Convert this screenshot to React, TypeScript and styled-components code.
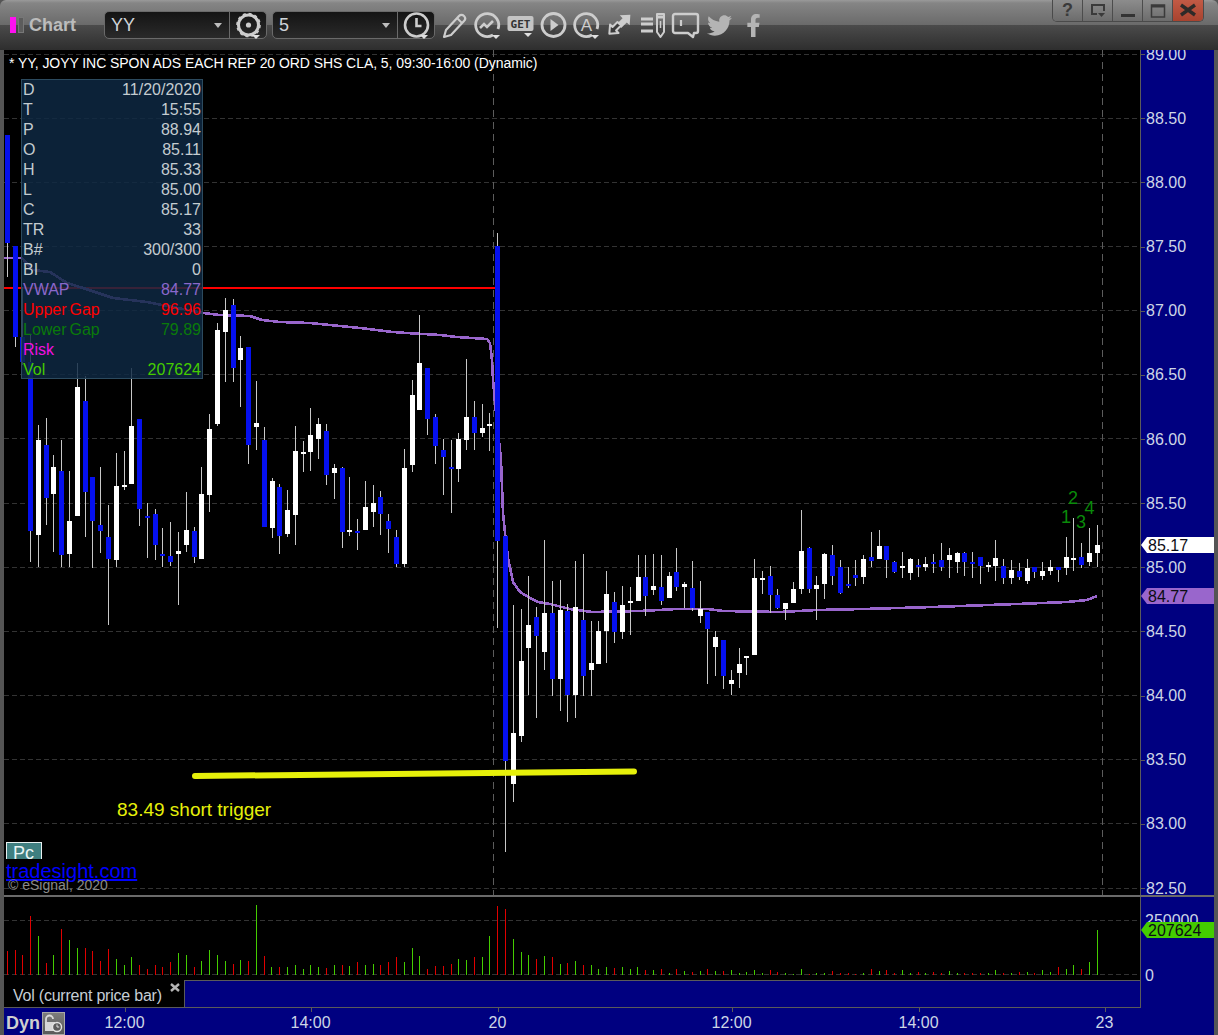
import React from "react";
import styled, { createGlobalStyle } from "styled-components";
import { FaTwitter, FaFacebookF } from "react-icons/fa";

const Global = createGlobalStyle`
  html, body { margin: 0; padding: 0; background: #555; }
  body { font-family: "Liberation Sans", Arial, sans-serif; }
`;

const AXIS_BLUE = "#000080";
const AXIS_TEXT = "#cdd6e6";
const LINE = "#5a5a5a";

const Page = styled.div`
  width: 1218px;
  height: 1035px;
  display: flex;
  flex-direction: column;
  overflow: hidden;
  background: #555;
  position: relative;
`;

/* ---------- toolbar ---------- */
const Toolbar = styled.header`
  height: 50px;
  flex: none;
  display: flex;
  align-items: center;
  padding-left: 10px;
  border-radius: 6px 6px 0 0;
  background: linear-gradient(
    #9a9a9a 0,
    #858585 3px,
    #6a6a6a 25px,
    #4b4b4b 25px,
    #3e3e3e 36px,
    #2e2e2e 50px
  );
`;
const TitleBlock = styled.div`
  width: 94px;
  flex: none;
  display: flex;
  align-items: center;
  gap: 2px;
`;
const Mark = styled.span<{ $on?: boolean }>`
  width: 6px;
  height: 16px;
  background: ${(p) => (p.$on ? "#ff10f0" : "#5c5c5c")};
  border: ${(p) => (p.$on ? "0" : "1px solid #777")};
  box-sizing: border-box;
`;
const TitleText = styled.span`
  margin-left: 3px;
  font-size: 18px;
  font-weight: 700;
  color: #bcbcbc;
`;
const Combo = styled.div`
  width: 163px;
  height: 28px;
  flex: none;
  margin-right: 5px;
  display: flex;
  box-sizing: border-box;
  border: 1px solid #6a6a6a;
  border-radius: 5px;
  background: linear-gradient(#141414, #2a2a2a);
`;
const ComboField = styled.div`
  flex: 1;
  display: flex;
  align-items: center;
  justify-content: space-between;
  padding: 0 7px 0 6px;
  font-size: 18px;
  color: #cfd4d8;
  border-right: 1px solid #6a6a6a;
`;
const Caret = styled.span`
  width: 0;
  height: 0;
  border-left: 4.5px solid transparent;
  border-right: 4.5px solid transparent;
  border-top: 5px solid #bdbdbd;
`;
const ComboButton = styled.div`
  width: 36px;
  flex: none;
  display: flex;
  align-items: center;
  justify-content: center;
`;
const IconRow = styled.div`
  display: flex;
  margin-left: -2.5px;
`;
const IconCell = styled.div<{ $wide?: boolean }>`
  width: ${(p) => (p.$wide ? 34 : 33)}px;
  height: 30px;
  flex: none;
  display: flex;
  align-items: center;
  justify-content: center;
  color: #b4b4b4;
`;
const WindowButtons = styled.div`
  margin-left: auto;
  margin-right: 14px;
  align-self: flex-start;
  display: flex;
  height: 21px;
  border: 1px solid #4a4a4a;
  border-top: 0;
  border-radius: 0 0 5px 5px;
  overflow: hidden;
`;
const WinButton = styled.div<{ $close?: boolean }>`
  width: 30px;
  box-sizing: border-box;
  display: flex;
  align-items: center;
  justify-content: center;
  border-right: 1px solid #4c4c4c;
  background: ${(p) =>
    p.$close
      ? "linear-gradient(#c25a45, #a8432f)"
      : "linear-gradient(#8c8c8c, #6c6c6c)"};
  font-size: 18px;
  font-weight: 700;
  color: #3a3a3a;
  &:last-child {
    border-right: 0;
  }
`;

/* ---------- price panel ---------- */
const Body = styled.main`
  flex: 1;
  display: flex;
  flex-direction: column;
  margin: 0 4px 4px;
  min-height: 0;
`;
const PriceRow = styled.section`
  height: 845px;
  flex: none;
  display: flex;
`;
const Plot = styled.div`
  width: 1136px;
  flex: none;
  position: relative;
  background: #000;
  overflow: hidden;
`;
const ChartSvg = styled.svg`
  display: block;
`;
const Headline = styled.div`
  position: absolute;
  left: 5px;
  top: 5px;
  font-size: 14px;
  line-height: 16px;
  letter-spacing: -0.06px;
  color: #fff;
  white-space: nowrap;
`;
const InfoPanel = styled.div`
  position: absolute;
  left: 17px;
  top: 29px;
  width: 182px;
  box-sizing: border-box;
  padding-top: 1px;
  height: 300px;
  box-shadow: inset 0 0 0 1px #2c4a5e;
  background: rgba(15, 41, 67, 0.83);
`;
const InfoRow = styled.div<{ $color?: string }>`
  height: 20px;
  padding: 0 2px;
  display: flex;
  justify-content: space-between;
  font-size: 16px;
  line-height: 20px;
  word-spacing: -1.5px;
  color: ${(p) => p.$color || "#c4ccd0"};
`;
const Trigger = styled.div`
  position: absolute;
  left: 113px;
  top: 749px;
  font-size: 19px;
  line-height: 22px;
  color: #e6f00a;
`;
const PcBadge = styled.div`
  position: absolute;
  left: 2px;
  top: 792px;
  width: 36px;
  height: 17px;
  box-sizing: border-box;
  border: 1px solid #e8f0f0;
  border-bottom: 0;
  background: #3f7f80;
  color: #e8f4f4;
  font-size: 18px;
  line-height: 21px;
  padding-left: 6px;
  overflow: hidden;
`;
const SiteLink = styled.div`
  position: absolute;
  left: 2px;
  top: 810px;
  font-size: 20px;
  line-height: 22px;
  color: #0000ff;
  text-decoration: underline;
`;
const Copyright = styled.div`
  position: absolute;
  left: 4px;
  top: 827px;
  font-size: 14px;
  line-height: 16px;
  color: #8a8a8a;
`;

const PriceAxis = styled.div`
  flex: 1;
  box-sizing: border-box;
  border-left: 1px solid ${LINE};
  background: ${AXIS_BLUE};
  position: relative;
  overflow: hidden;
`;
const PriceScale = styled.div`
  margin-top: -27.4px;
  display: flex;
  flex-direction: column;
`;
const PriceLabel = styled.div`
  height: 64.154px;
  flex: none;
  display: flex;
  align-items: center;
  gap: 1px;
  font-size: 16px;
  color: ${AXIS_TEXT};
  &::before {
    content: "";
    width: 4px;
    height: 1px;
    background: ${LINE};
  }
`;
const Tag = styled.div<{ $top: number; $bg: string }>`
  position: absolute;
  left: 0;
  right: 0;
  top: ${(p) => p.$top}px;
  height: 16px;
  padding-left: 7px;
  background: ${(p) => p.$bg};
  color: #0c0c14;
  font-size: 16px;
  line-height: 17px;
  clip-path: polygon(0 50%, 6px 0, 100% 0, 100% 100%, 6px 100%);
`;

const Separator = styled.div`
  height: 2px;
  flex: none;
  background: #6a6a6a;
`;

/* ---------- volume panel ---------- */
const LowerRow = styled.section`
  height: 111px;
  flex: none;
  display: flex;
`;
const LowerLeft = styled.div`
  width: 1136px;
  flex: none;
  display: flex;
  flex-direction: column;
`;
const VolumePlot = styled.div`
  height: 83px;
  flex: none;
  background: #000;
`;
const LegendRow = styled.div`
  height: 28px;
  flex: none;
  display: flex;
  box-sizing: border-box;
  border-bottom: 1px solid ${LINE};
`;
const LegendLabel = styled.div`
  width: 180px;
  flex: none;
  position: relative;
  background: #000;
  padding-left: 9px;
  box-sizing: border-box;
  font-size: 16px;
  line-height: 31px;
  letter-spacing: -0.22px;
  color: #c6ced6;
`;
const CloseGlyph = styled.svg`
  position: absolute;
  right: 4px;
  top: 3px;
`;
const LegendFill = styled.div`
  flex: 1;
  background: ${AXIS_BLUE};
  border-top: 1px solid ${LINE};
  border-left: 1px solid ${LINE};
`;
const VolumeAxis = styled.div`
  flex: 1;
  box-sizing: border-box;
  border-left: 1px solid ${LINE};
  background: ${AXIS_BLUE};
  position: relative;
  overflow: hidden;
  font-size: 16px;
  color: ${AXIS_TEXT};
  padding-left: 4px;
`;
const VolumeTick = styled.div<{ $mt: number }>`
  height: 18px;
  line-height: 18px;
  margin-top: ${(p) => p.$mt}px;
`;

/* ---------- time row ---------- */
const TimeRow = styled.footer`
  flex: 1;
  display: flex;
  background: ${AXIS_BLUE};
`;
const DynCell = styled.div`
  width: 61px;
  flex: none;
  display: flex;
  align-items: center;
  padding-left: 2px;
  box-sizing: border-box;
  font-size: 18px;
  font-weight: 700;
  color: #cfcfcf;
  gap: 2px;
`;
const LockButton = styled.div`
  width: 23px;
  height: 23px;
  flex: none;
  box-sizing: border-box;
  border: 1px solid #a8a8a8;
  background: linear-gradient(#7c7c7c, #5a5a5a);
  display: flex;
  align-items: center;
  justify-content: center;
`;
const TimeTick = styled.div<{ $gap: number }>`
  width: 0;
  flex: none;
  margin-left: ${(p) => p.$gap}px;
  display: flex;
  justify-content: center;
  position: relative;
  font-size: 16px;
  line-height: 30px;
  color: ${AXIS_TEXT};
  white-space: nowrap;
  &::before {
    content: "";
    position: absolute;
    left: 0;
    top: 0;
    width: 1px;
    height: 4px;
    background: ${LINE};
  }
`;

/* ---------- data (page pixel coordinates) ---------- */
// x, wickTop, wickBottom, bodyTop, bodyBottom, white?
const candles: number[][] = [
  [7,135,277,135,243,0],[15,246,347,246,337,0],[22,287,365,337,362,0],[30,335,562,362,531,0],
  [38,425,567,440,535,1],[46,418,525,445,498,0],[53,455,552,467,494,1],[61,440,567,471,555,0],
  [69,471,567,521,554,1],[77,363,516,387,516,1],[85,376,537,401,492,0],[92,477,568,477,521,0],
  [100,467,553,525,531,0],[108,505,625,537,559,0],[116,453,567,486,560,1],[124,451,490,485,487,1],
  [131,368,484,426,484,1],[139,419,526,419,509,0],[147,503,558,516,518,0],[155,509,560,514,545,0],
  [162,528,567,554,556,0],[170,522,566,556,562,0],[178,532,605,551,554,1],[186,492,552,530,545,1],
  [194,527,563,531,557,0],[201,467,559,494,559,1],[209,414,512,429,495,1],[217,323,426,330,424,1],
  [225,298,382,310,332,1],[233,299,382,305,368,0],[240,336,407,348,360,1],[248,347,464,347,445,0],
  [256,381,450,423,427,1],[264,427,527,440,527,0],[272,478,538,481,528,1],[279,484,554,487,536,0],
  [287,490,537,510,534,1],[295,426,545,451,515,1],[303,441,472,452,454,1],[310,408,471,435,452,1],
  [318,418,459,424,439,1],[326,424,485,431,475,0],[334,464,499,468,473,1],[342,467,548,468,532,0],
  [349,477,536,530,532,1],[357,519,550,531,533,0],[365,481,530,507,530,1],[373,485,527,503,512,1],
  [380,491,535,497,514,0],[388,514,553,521,529,0],[396,530,567,537,564,0],[404,449,567,468,564,1],
  [412,380,472,395,465,1],[419,315,410,363,410,1],[427,368,435,368,419,0],[435,414,464,417,446,0],
  [443,439,495,450,457,0],[451,440,513,467,469,0],[458,433,482,439,469,1],[466,359,450,417,440,1],
  [474,401,450,417,433,0],[482,404,437,428,433,1],[489,413,451,424,426,1],[497,233,628,246,541,0],
  [505,536,852,536,761,0],[513,605,802,733,784,1],[521,609,742,661,736,1],[528,576,695,625,648,1],
  [536,607,718,617,636,0],[544,540,670,613,652,1],[552,581,696,613,679,0],[560,580,711,610,679,1],
  [567,604,722,611,695,0],[575,561,718,607,695,1],[583,554,696,620,676,0],[591,621,696,663,670,1],
  [598,621,664,631,664,1],[606,571,663,594,631,1],[614,592,643,602,632,0],[622,586,639,605,632,1],
  [630,587,635,601,603,1],[638,555,601,577,601,1],[645,555,616,577,596,0],[653,554,595,586,590,1],
  [661,555,605,587,601,0],[669,572,598,576,598,1],[676,548,591,572,587,0],[684,582,608,584,587,1],
  [692,561,611,588,608,0],[700,581,623,609,616,1],[707,612,684,612,629,0],[715,631,676,637,647,1],
  [723,640,689,640,676,0],[731,670,695,680,684,1],[739,648,688,664,673,1],[746,656,675,656,658,1],
  [754,559,655,578,655,1],[762,571,594,578,580,1],[770,566,613,576,595,0],[777,589,609,595,608,0],
  [785,603,620,603,609,1],[793,582,603,589,603,1],[801,510,594,551,589,1],[809,547,593,548,589,0],
  [816,576,620,585,589,1],[824,553,599,554,584,1],[832,545,585,555,576,0],[840,560,594,567,593,0],
  [848,567,588,584,586,0],[855,560,586,575,578,0],[863,555,584,559,577,1],[871,532,567,557,561,0],
  [879,530,559,546,559,1],[886,546,578,546,560,0],[894,561,573,562,572,0],[902,552,578,566,568,1],
  [910,558,580,559,573,1],[918,559,577,565,567,0],[925,557,571,564,567,1],[933,554,573,562,564,0],
  [941,543,571,560,567,0],[949,548,578,555,560,1],[957,552,573,553,562,1],[964,552,576,553,562,0],
  [972,552,578,562,564,0],[980,557,584,557,566,0],[988,562,572,565,567,1],[995,540,581,558,566,1],
  [1003,559,584,566,578,0],[1011,560,584,570,578,1],[1019,563,580,571,577,0],[1027,559,584,568,581,1],
  [1034,567,578,567,572,0],[1042,562,580,571,576,1],[1050,560,575,567,571,1],[1058,567,582,567,570,0],
  [1066,537,575,557,568,1],[1073,518,571,558,560,1],[1081,543,568,557,565,0],[1089,528,566,553,562,1],
  [1097,525,567,545,553,1],
];

// x, top, green?
const volumes: number[][] = [
  [7,951,0],[15,950,0],[22,955,0],[30,916,0],[38,936,1],[46,963,0],[53,955,1],[61,929,0],[69,940,1],[77,948,1],
  [85,948,0],[92,951,0],[100,961,0],[108,949,0],[116,959,1],[124,965,1],[131,957,1],[139,965,0],[147,969,0],[155,965,0],
  [162,967,0],[170,962,0],[178,953,1],[186,955,1],[194,967,0],[201,961,1],[209,950,1],[217,955,1],[225,961,1],[233,964,0],
  [240,960,1],[248,961,0],[256,905,1],[264,956,0],[271,967,1],[279,967,0],[287,967,1],[295,965,1],[303,969,1],[310,965,1],
  [318,967,1],[326,968,0],[334,965,1],[342,965,0],[349,966,1],[357,962,0],[365,965,1],[373,964,1],[380,965,0],[388,962,0],
  [396,957,0],[404,962,1],[412,948,1],[419,956,1],[427,969,0],[435,966,0],[443,966,0],[451,964,0],[458,959,1],[466,960,1],
  [474,957,0],[482,957,1],[489,936,1],[497,906,0],[505,909,0],[513,939,1],[521,952,1],[528,955,1],[536,959,0],[544,956,1],
  [552,957,0],[560,964,1],[567,963,0],[575,961,1],[583,965,0],[591,965,1],[598,969,1],[606,967,1],[614,968,0],[622,967,1],
  [630,969,1],[637,967,1],[645,970,0],[653,970,1],[661,969,0],[669,973,1],[676,969,0],[684,971,1],[692,972,0],[700,971,1],
  [707,969,0],[715,971,1],[723,971,0],[731,970,1],[739,973,1],[746,972,1],[754,970,1],[762,973,1],[770,970,0],[777,972,0],
  [785,973,1],[793,974,1],[801,969,1],[809,974,0],[816,973,1],[824,973,1],[832,971,0],[840,973,0],[848,973,0],[855,974,0],
  [863,973,1],[871,969,0],[879,971,1],[886,970,0],[894,973,0],[902,970,1],[910,973,1],[918,972,0],[925,973,1],[933,972,0],
  [941,973,0],[949,971,1],[957,973,1],[964,973,0],[972,973,0],[980,973,0],[988,973,1],[995,970,1],[1003,973,0],[1011,973,1],
  [1019,972,0],[1027,972,1],[1034,973,0],[1042,970,1],[1050,972,1],[1058,967,0],[1066,969,1],[1073,965,1],[1081,969,0],[1089,962,1],
  [1097,930,1],
];

const vwap =
  "4,258 22,258 33,270 50,272 67,283 83,288 113,298 147,302 203,313 220,315 250,316 262,320 280,322 310,323 340,326 360,328 393,332 407,333 440,335 457,337 487,339 490,343 492,360 493,380 495,403 501,460 502,487 503,513 505,533 508,558 513,582 520,592 530,598 538,602 550,604 570,609 592,612 640,611 677,609 707,609 723,611 780,612 817,610 863,609 933,607 1017,604 1067,602 1087,600 1097,596";

const prices = ["89.00","88.50","88.00","87.50","87.00","86.50","86.00","85.50","85.00","84.50","84.00","83.50","83.00","82.50"];
const gridY = prices.map((_, i) => Math.round(53.5 + i * 64.154) + 0.5);

const info: { k: string; v?: string; c?: string }[] = [
  { k: "D", v: "11/20/2020" },
  { k: "T", v: "15:55" },
  { k: "P", v: "88.94" },
  { k: "O", v: "85.11" },
  { k: "H", v: "85.33" },
  { k: "L", v: "85.00" },
  { k: "C", v: "85.17" },
  { k: "TR", v: "33" },
  { k: "B#", v: "300/300" },
  { k: "BI", v: "0" },
  { k: "VWAP", v: "84.77", c: "#8a68cc" },
  { k: "Upper Gap", v: "96.96", c: "#ff0000" },
  { k: "Lower Gap", v: "79.89", c: "#0a7a0a" },
  { k: "Risk", c: "#f010e0" },
  { k: "Vol", v: "207624", c: "#44cc00" },
];

const times: [string, number][] = [
  ["12:00", 59.5],
  ["14:00", 186],
  ["20", 187],
  ["12:00", 234],
  ["14:00", 187],
  ["23", 186],
];

/* ---------- icons ---------- */
const IC = "#cdcdcd";
const Drop = ({ x, y }: { x: number; y: number }) => (
  <path d={`M${x - 4} ${y}h8l-4 4z`} fill="#e0e0e0" />
);
const Svg: React.FC<{ children: React.ReactNode }> = ({ children }) => (
  <svg width="33" height="30" viewBox="0 0 33 30" fill="none">
    {children}
  </svg>
);
const GearIcon = () => (
  <Svg>
    <circle cx="16.5" cy="15" r="10" stroke={IC} strokeWidth="3" />
    <circle cx="16.5" cy="15" r="11.5" stroke={IC} strokeWidth="1.6" strokeDasharray="3 3" />
    <circle cx="16.5" cy="15" r="2.6" fill={IC} />
    <Drop x={24} y={25} />
  </Svg>
);
const ClockIcon = () => (
  <Svg>
    <circle cx="16.5" cy="15" r="11.5" stroke={IC} strokeWidth="2.6" />
    <path d="M16.5 8v8h5" stroke={IC} strokeWidth="2.6" />
    <Drop x={24} y={25} />
  </Svg>
);
const PencilIcon = () => (
  <Svg>
    <path
      d="M6 27l2-7L21 6c1.500-1.500 3.500-1.500 5 0s1.500 3.500 0 5L13 25z"
      stroke={IC}
      strokeWidth="2.200"
      strokeLinejoin="round"
    />
    <path d="M19 8l5 5" stroke={IC} strokeWidth="1.800" />
  </Svg>
);
const ChartIcon = () => (
  <Svg>
    <path d="M22 25a11.500 11.500 0 1 1 5-6" stroke={IC} strokeWidth="2.800" />
    <path d="M9 18l4-4 3 3 6-6" stroke={IC} strokeWidth="2.600" />
    <Drop x={25} y={25} />
  </Svg>
);
const GetIcon = () => (
  <Svg>
    <rect x="3.500" y="6" width="26" height="15" rx="2" fill="#c4c4c4" />
    <text x="16.500" y="18" textAnchor="middle" fontFamily="'DejaVu Sans Mono', monospace" fontSize="11" fontWeight="700" fill="#333">
      GET
    </text>
    <Drop x={24} y={23} />
  </Svg>
);
const PlayIcon = () => (
  <Svg>
    <circle cx="16.500" cy="15" r="11.500" stroke={IC} strokeWidth="2.800" />
    <path d="M13.500 9l8 6-8 6z" fill={IC} />
  </Svg>
);
const AutoIcon = () => (
  <Svg>
    <path d="M22 25a11.500 11.500 0 1 1 5-6" stroke={IC} strokeWidth="2.800" />
    <text x="16.500" y="21" textAnchor="middle" fontFamily="'Liberation Sans', sans-serif" fontSize="17" fill={IC}>
      A
    </text>
    <Drop x={25} y={25} />
  </Svg>
);
const SwapIcon = () => (
  <Svg>
    <g transform="translate(21 11) rotate(45)">
      <path d="M0-9L7-1H3V7H-3V-1H-7z" fill={IC} />
    </g>
    <g transform="translate(12 18) rotate(225)">
      <path d="M0-8L6-1H2.500V6H-2.500V-1H-6z" fill="#3a3a3a" stroke={IC} strokeWidth="2" strokeLinejoin="round" />
    </g>
  </Svg>
);
const ListIcon = () => (
  <Svg>
    <path d="M5 9h12M5 14h12M5 21h12" stroke={IC} strokeWidth="2.800" />
    <path d="M21 4h7v18l-3.500 5-3.500-5z" stroke={IC} strokeWidth="2" strokeLinejoin="round" />
    <path d="M21 7h7" stroke={IC} strokeWidth="3" />
    <path d="M24.500 11v7" stroke={IC} strokeWidth="1.500" />
  </Svg>
);
const SpeechIcon = () => (
  <Svg>
    <path
      d="M6 4h21a2 2 0 0 1 2 2v15a2 2 0 0 1-2 2h-2l-1 4-5-4H6a2 2 0 0 1-2-2V6a2 2 0 0 1 2-2z"
      stroke={IC}
      strokeWidth="2.400"
      strokeLinejoin="round"
    />
    <path d="M12 10v6" stroke={IC} strokeWidth="2.200" />
  </Svg>
);
const LockClock = () => (
  <svg width="21" height="21" viewBox="0 0 21 21" fill="none">
    <path d="M3 9V6a3.500 3.500 0 0 1 7 0" stroke="#d8d8d8" strokeWidth="1.800" />
    <rect x="2" y="9" width="10" height="9" fill="#d8d8d8" />
    <circle cx="14" cy="14" r="4.500" fill="#5c5c5c" stroke="#e4e4e4" strokeWidth="1.400" />
    <path d="M14 11.500V14h2.200" stroke="#e4e4e4" />
  </svg>
);

export default function App() {
  return (
    <>
      <Global />
      <Page>
        <Toolbar>
          <TitleBlock>
            <Mark $on />
            <Mark />
            <TitleText>Chart</TitleText>
          </TitleBlock>
          <Combo>
            <ComboField>
              YY
              <Caret />
            </ComboField>
            <ComboButton>
              <GearIcon />
            </ComboButton>
          </Combo>
          <Combo>
            <ComboField>
              5
              <Caret />
            </ComboField>
            <ComboButton>
              <ClockIcon />
            </ComboButton>
          </Combo>
          <IconRow>
            <IconCell><PencilIcon /></IconCell>
            <IconCell><ChartIcon /></IconCell>
            <IconCell><GetIcon /></IconCell>
            <IconCell><PlayIcon /></IconCell>
            <IconCell><AutoIcon /></IconCell>
            <IconCell><SwapIcon /></IconCell>
            <IconCell><ListIcon /></IconCell>
            <IconCell $wide><SpeechIcon /></IconCell>
            <IconCell $wide><FaTwitter size={25} /></IconCell>
            <IconCell $wide><FaFacebookF size={23} /></IconCell>
          </IconRow>
          <WindowButtons>
            <WinButton>?</WinButton>
            <WinButton>
              <svg width="18" height="17" viewBox="0 0 18 17" fill="none">
                <path d="M8 12H3V3h12v6" stroke="#3a3a3a" strokeWidth="2" />
                <path d="M9 11h7l-3.500 4z" fill="#3a3a3a" />
              </svg>
            </WinButton>
            <WinButton>
              <svg width="18" height="17" viewBox="0 0 18 17">
                <rect x="2" y="12" width="14" height="3" fill="#333" />
              </svg>
            </WinButton>
            <WinButton>
              <svg width="18" height="17" viewBox="0 0 18 17" fill="none">
                <rect x="2.500" y="3" width="13" height="12" stroke="#3a3a3a" strokeWidth="1.500" />
                <rect x="2" y="3" width="14" height="2.500" fill="#3a3a3a" />
              </svg>
            </WinButton>
            <WinButton $close>
              <svg width="20" height="17" viewBox="0 0 20 17" fill="none">
                <path d="M3 3l14 10M17 3L3 13" stroke="#2e2a28" strokeWidth="3.400" />
              </svg>
            </WinButton>
          </WindowButtons>
        </Toolbar>

        <Body>
          <PriceRow>
            <Plot>
              <ChartSvg width="1136" height="845" viewBox="4 50 1136 845">
                <g stroke="#333333" strokeDasharray="5 3" shapeRendering="crispEdges">
                  {gridY.map((y) => (
                    <line key={y} x1="4" x2="1140" y1={y} y2={y} />
                  ))}
                </g>
                <g stroke="#5c5c5c" strokeDasharray="7 5" shapeRendering="crispEdges">
                  <line x1="493.500" x2="493.500" y1="50" y2="895" />
                  <line x1="1102.500" x2="1102.500" y1="50" y2="895" />
                </g>
                <rect x="4" y="287" width="491" height="2" fill="#ff0000" />
                <polyline points={vwap} fill="none" stroke="#9966cc" strokeWidth="2.600" shapeRendering="crispEdges" />
                <g shapeRendering="crispEdges">
                  {candles.map(([x, wt, wb, bt, bb, w]) => (
                    <g key={x}>
                      <rect x={x} y={wt} width="1" height={wb - wt} fill="#c8c8c8" />
                      <rect
                        x={x - 2}
                        y={bt}
                        width="5"
                        height={bb - bt}
                        fill={w ? "#ffffff" : "#0510ee"}
                      />
                    </g>
                  ))}
                </g>
                <line x1="195" y1="776" x2="634" y2="771.500" stroke="#e6f00a" strokeWidth="6" strokeLinecap="round" />
                <g fontFamily="'Liberation Sans', sans-serif" fontSize="18" fill="#0a8a0a">
                  <text x="1061" y="523">1</text>
                  <text x="1068" y="504">2</text>
                  <text x="1076" y="528">3</text>
                  <text x="1084.500" y="514">4</text>
                </g>
              </ChartSvg>
              <Headline>* YY, JOYY INC SPON ADS EACH REP 20 ORD SHS CLA, 5, 09:30-16:00 (Dynamic)</Headline>
              <InfoPanel>
                {info.map((r) => (
                  <InfoRow key={r.k} $color={r.c}>
                    <span>{r.k}</span>
                    <span>{r.v}</span>
                  </InfoRow>
                ))}
              </InfoPanel>
              <Trigger>83.49 short trigger</Trigger>
              <PcBadge>Pc</PcBadge>
              <SiteLink>tradesight.com</SiteLink>
              <Copyright>© eSignal, 2020</Copyright>
            </Plot>
            <PriceAxis>
              <PriceScale>
                {prices.map((p) => (
                  <PriceLabel key={p}>{p}</PriceLabel>
                ))}
              </PriceScale>
              <Tag $top={487} $bg="#ffffff">85.17</Tag>
              <Tag $top={538} $bg="#9966cc">84.77</Tag>
            </PriceAxis>
          </PriceRow>
          <Separator />
          <LowerRow>
            <LowerLeft>
              <VolumePlot>
                <ChartSvg width="1136" height="83" viewBox="4 897 1136 83">
                  <g stroke="#333333" strokeDasharray="5 3" shapeRendering="crispEdges">
                    <line x1="4" x2="1140" y1="920.500" y2="920.500" />
                    <line x1="4" x2="1140" y1="974.500" y2="974.500" />
                  </g>
                  <g shapeRendering="crispEdges">
                    {volumes.map(([x, t, g]) => (
                      <rect key={x} x={x} y={t} width="1" height={975 - t} fill={g ? "#44cc00" : "#e00000"} />
                    ))}
                  </g>
                </ChartSvg>
              </VolumePlot>
              <LegendRow>
                <LegendLabel>
                  Vol (current price bar)
                  <CloseGlyph width="10" height="10" viewBox="0 0 10 10">
                    <path d="M1 1l8 7M9 1L1 8" stroke="#b4b4b4" strokeWidth="2.400" />
                  </CloseGlyph>
                </LegendLabel>
                <LegendFill />
              </LegendRow>
            </LowerLeft>
            <VolumeAxis>
              <VolumeTick $mt={15}>250000</VolumeTick>
              <VolumeTick $mt={37}>0</VolumeTick>
              <Tag $top={25} $bg="#44cc00">207624</Tag>
            </VolumeAxis>
          </LowerRow>
          <TimeRow>
            <DynCell>
              Dyn
              <LockButton>
                <LockClock />
              </LockButton>
            </DynCell>
            {times.map(([t, g], i) => (
              <TimeTick key={i} $gap={g}>{t}</TimeTick>
            ))}
          </TimeRow>
        </Body>
      </Page>
    </>
  );
}
